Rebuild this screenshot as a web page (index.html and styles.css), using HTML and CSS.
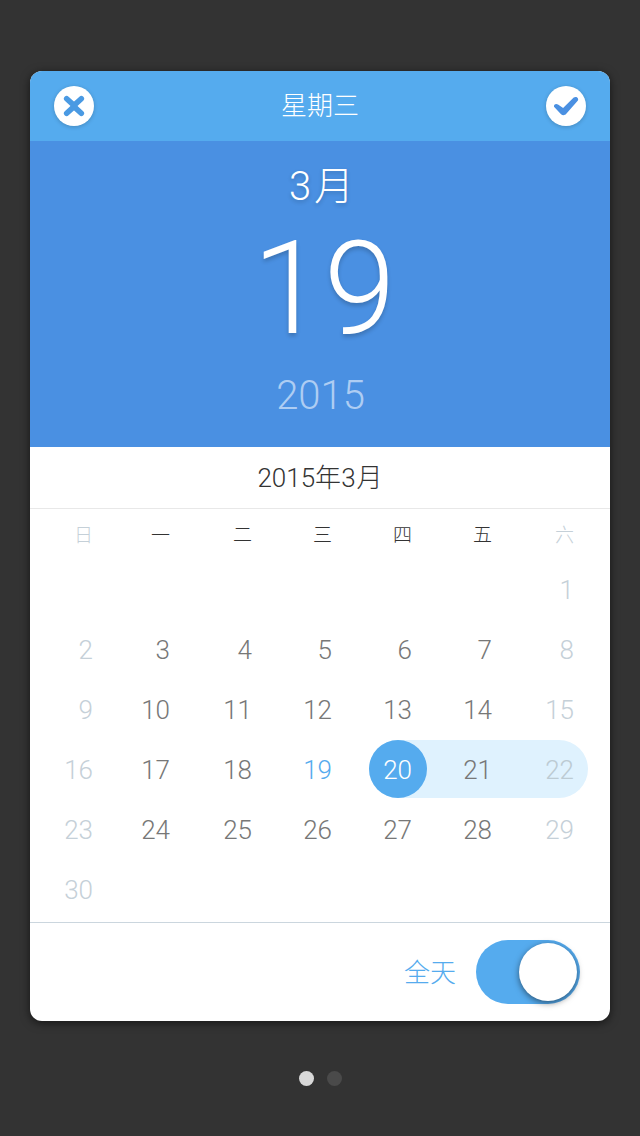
FILE: index.html
```html
<!DOCTYPE html>
<html lang="zh-CN">
<head>
<meta charset="utf-8">
<title>2015年3月</title>
<link rel="stylesheet" href="styles.css">
</head>
<body>
<main class="card">
  <header class="bar">
    <button class="round" aria-label="取消"><svg width="40" height="40" viewBox="0 0 40 40"><path d="M12.700 12.700L20 19.400L27.300 12.700M12.700 27.300L20 20.600L27.300 27.300M19 20H21" fill="none" stroke="#4a9ae3" stroke-width="5.600" stroke-linecap="round" stroke-linejoin="round"/></svg></button>
    <h1 class="weekday">星期三</h1>
    <button class="round" aria-label="确定"><svg width="40" height="40" viewBox="0 0 40 40"><path d="M8 20.800C7.400 18.200 10.200 17.200 12 18.500L17.100 21.900L27.700 11.600C30 9.600 33.500 12.100 31.700 14.800L20.300 27.700C18.500 29.700 16.500 29.500 14.800 27.900Z" fill="#4a90e2"/></svg></button>
  </header>
  <section class="hero">
    <div class="month"><span class="num">3</span>月</div>
    <div class="day">19</div>
    <div class="year">2015</div>
  </section>
  <h2 class="title">2015年<span class="num">3</span>月</h2>
  <section class="calendar">
    <div class="row names"><span class="off">日</span><span>一</span><span>二</span><span>三</span><span>四</span><span>五</span><span class="off">六</span></div>
    <div class="row"><span></span><span></span><span></span><span></span><span></span><span></span><span class="off">1</span></div>
    <div class="row"><span class="off">2</span><span>3</span><span>4</span><span>5</span><span>6</span><span>7</span><span class="off">8</span></div>
    <div class="row"><span class="off">9</span><span>10</span><span>11</span><span>12</span><span>13</span><span>14</span><span class="off">15</span></div>
    <div class="row"><i class="range"><b class="start"></b></i><span class="off">16</span><span>17</span><span>18</span><span class="today">19</span><span class="selected">20</span><span>21</span><span class="off last">22</span></div>
    <div class="row"><span class="off">23</span><span>24</span><span>25</span><span>26</span><span>27</span><span>28</span><span class="off">29</span></div>
    <div class="row"><span class="off">30</span></div>
  </section>
  <footer class="foot">
    <span class="label">全天</span>
    <div class="switch"><div class="knob"></div></div>
  </footer>
</main>
<nav class="dots"><span class="dot active"></span><span class="dot"></span></nav>
</body>
</html>
```
FILE: styles.css
```css
* { box-sizing: border-box; }
body {
  margin: 0;
  height: 1136px;
  padding: 71px 30px 0;
  background: #333;
  font-family: Roboto, "Noto Sans CJK SC", sans-serif;
  font-weight: 300;
  overflow: hidden;
}
.card {
  height: 950px;
  border-radius: 12px;
  background: #fff;
  overflow: hidden;
  box-shadow: 0 2px 10px rgba(0, 0, 0, .6);
}
.bar {
  height: 70px;
  padding: 0 24px;
  display: flex;
  align-items: center;
  justify-content: space-between;
  background: #55abee;
}
.weekday {
  margin: 0;
  font-size: 26px;
  line-height: 40px;
  font-weight: 300;
  color: #fff;
}
.round {
  width: 40px;
  height: 40px;
  padding: 0;
  border: 0;
  border-radius: 50%;
  background: #fff;
  box-shadow: 0 1px 4px rgba(0, 0, 0, .2);
}
.round svg { display: block; }
.hero {
  height: 306px;
  padding-top: 16px;
  background: #4a90e2;
  color: #fff;
  text-align: center;
}
.month {
  padding-left: 3px;
  font-size: 40px;
  line-height: 60px;
  text-shadow: 0 2px 4px rgba(0, 0, 0, .2);
}
.month .num { margin-right: 3px; }
.day {
  padding: 3px 0 0 8px;
  font-size: 129px;
  line-height: 138px;
  text-shadow: 0 3px 4px rgba(0, 0, 0, .2);
}
.year {
  margin-top: 8px;
  padding-left: 1px;
  font-size: 40px;
  line-height: 60px;
  color: #aecdf3;
}
.title {
  margin: 0;
  height: 62px;
  padding-top: 1px;
  border-bottom: 1px solid #e8e8e8;
  font-size: 26px;
  line-height: 61px;
  font-weight: 300;
  text-align: center;
  color: #333;
}
.title .num { margin-right: 1px; }
.calendar { height: 413px; }
.row {
  height: 60px;
  display: grid;
  grid-template-columns: 63px 77px 82px 80px 80px 80px 82px 36px;
  grid-template-rows: 60px;
  font-size: 26px;
  line-height: 60px;
  text-align: right;
  color: #777;
}
.row span { z-index: 1; grid-row: 1; }
.row span:nth-of-type(1) { grid-column: 1; }
.row span:nth-of-type(2) { grid-column: 2; }
.row span:nth-of-type(3) { grid-column: 3; }
.row span:nth-of-type(4) { grid-column: 4; }
.row span:nth-of-type(5) { grid-column: 5; }
.row span:nth-of-type(6) { grid-column: 6; }
.row span:nth-of-type(7) { grid-column: 7; }
.names {
  height: 51px;
  padding-top: 1px;
  grid-template-rows: 50px;
  font-size: 19px;
  line-height: 51px;
  color: #333;
}
.row .off { color: #c5d0d8; }
.row .today { color: #55abee; }
.row .selected { color: #fff; }
.row .last { color: #bccbd3; }
.range {
  grid-row: 1;
  grid-column: 5 / 9;
  height: 58px;
  margin: 0 22px 0 37px;
  border-radius: 29px;
  background: #dff2fe;
}
.start {
  display: block;
  width: 58px;
  height: 58px;
  border-radius: 50%;
  background: #55abee;
}
.foot {
  height: 99px;
  padding-right: 30px;
  border-top: 1px solid #cbd6de;
  display: flex;
  align-items: center;
  justify-content: flex-end;
  gap: 20px;
}
.label {
  padding-top: 2px;
  font-size: 26px;
  line-height: 40px;
  color: #55abee;
}
.switch {
  width: 104px;
  height: 64px;
  padding: 3px;
  display: flex;
  justify-content: flex-end;
  border-radius: 32px;
  background: #55abee;
}
.knob {
  width: 58px;
  height: 58px;
  border-radius: 50%;
  background: #fff;
  box-shadow: 0 2px 6px rgba(0, 0, 0, .5);
}
.dots {
  margin-top: 50px;
  display: flex;
  justify-content: center;
  gap: 13px;
}
.dot {
  width: 15px;
  height: 15px;
  border-radius: 50%;
  background: #4a4a4a;
}
.dot.active { background: #d8d8d8; }
```
